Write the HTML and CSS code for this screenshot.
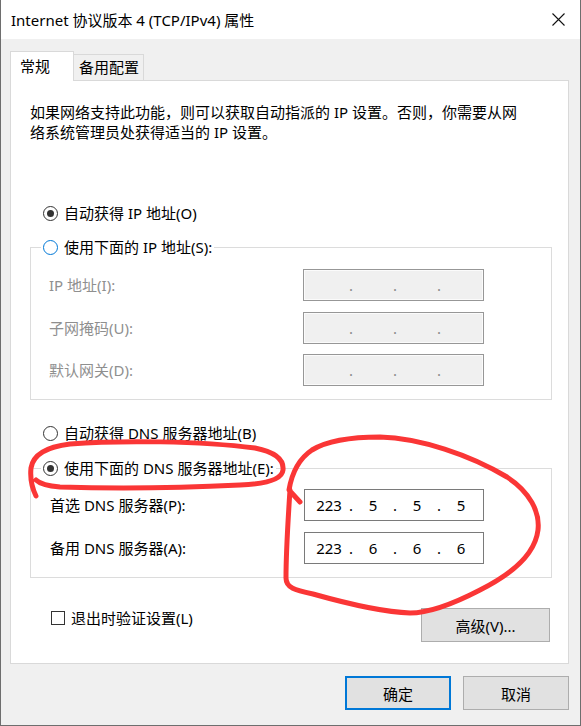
FILE: index.html
```html
<!DOCTYPE html>
<html lang="zh-CN">
<head>
<meta charset="utf-8">
<title>Internet 协议版本 4 (TCP/IPv4) 属性</title>
<link rel="stylesheet" href="styles.css">
</head>
<body>
<div class="window">
  <div class="titlebar">
    <span class="title">Internet 协议版本 4 (TCP/IPv4) 属性</span>
    <svg class="close" width="13" height="13" viewBox="0 0 13 13"><path d="M0.5 0.5 L12.5 12.5 M12.5 0.5 L0.5 12.5" stroke="#111" stroke-width="1.1" fill="none"/></svg>
  </div>
  <div class="main">
    <div class="tabs">
      <div class="tab active">常规</div>
      <div class="tab">备用配置</div>
    </div>
    <div class="panel">
      <p class="intro">如果网络支持此功能，则可以获取自动指派的 IP 设置。否则，你需要从网<br>络系统管理员处获得适当的 IP 设置。</p>

      <div class="option first"><span class="radio checked"></span><span>自动获得 IP 地址(O)</span></div>

      <fieldset class="group ip">
        <legend><span class="option"><span class="radio focus"></span><span>使用下面的 IP 地址(S):</span></span></legend>
        <div class="grid">
          <span class="lbl disabled">IP 地址(I):</span>
          <div class="ipbox off"><span class="oct"></span><span class="dot">.</span><span class="oct"></span><span class="dot">.</span><span class="oct"></span><span class="dot">.</span><span class="oct"></span></div>
          <span class="lbl disabled">子网掩码(U):</span>
          <div class="ipbox off"><span class="oct"></span><span class="dot">.</span><span class="oct"></span><span class="dot">.</span><span class="oct"></span><span class="dot">.</span><span class="oct"></span></div>
          <span class="lbl disabled">默认网关(D):</span>
          <div class="ipbox off"><span class="oct"></span><span class="dot">.</span><span class="oct"></span><span class="dot">.</span><span class="oct"></span><span class="dot">.</span><span class="oct"></span></div>
        </div>
      </fieldset>

      <div class="option dns-auto"><span class="radio"></span><span>自动获得 DNS 服务器地址(B)</span></div>

      <fieldset class="group dns">
        <legend><span class="option"><span class="radio checked"></span><span>使用下面的 DNS 服务器地址(E):</span></span></legend>
        <div class="grid">
          <span class="lbl">首选 DNS 服务器(P):</span>
          <div class="ipbox"><span class="oct">223</span><span class="dot">.</span><span class="oct">5</span><span class="dot">.</span><span class="oct">5</span><span class="dot">.</span><span class="oct">5</span></div>
          <span class="lbl">备用 DNS 服务器(A):</span>
          <div class="ipbox"><span class="oct">223</span><span class="dot">.</span><span class="oct">6</span><span class="dot">.</span><span class="oct">6</span><span class="dot">.</span><span class="oct">6</span></div>
        </div>
      </fieldset>

      <div class="bottom-row">
        <div class="check-row"><span class="checkbox"></span><span>退出时验证设置(L)</span></div>
        <button class="btn advanced">高级(V)...</button>
      </div>
    </div>
    <div class="dialog-buttons">
      <button class="btn default">确定</button>
      <button class="btn">取消</button>
    </div>
  </div>
  <svg class="annot" width="581" height="726" viewBox="0 0 581 726">
    <path d="M36 496 C32 488 30 478 31 468 C33 455 45 447 70 444 C120 440 200 441 255 448 C275 452 284 460 283 470 C282 480 265 484 240 485 C180 488 120 489 60 487 C48 486 40 484 36 480" />
    <path d="M300 502 L289 490 C292 472 300 458 312 450 C325 442 345 437 380 437 C420 438 470 455 507 477 C530 492 540 512 538 530 C535 555 510 575 480 590 C455 603 430 613 410 613 C380 612 345 603 313 594 C295 590 286 588 286 578 C286 555 288 520 290 490" />
  </svg>
</div>
</body>
</html>
```

FILE: styles.css
```css
* { box-sizing: border-box; }
html, body { margin: 0; padding: 0; background: #ffffff; }
body {
  font-family: "Noto Sans", "Noto Sans CJK SC", sans-serif;
  font-size: 15px;
  color: #000;
}
.window {
  position: relative;
  width: 581px;
  height: 726px;
  display: flex;
  flex-direction: column;
  border-left: 1px solid #6e6e6e;
  border-right: 1px solid #6e6e6e;
  border-bottom: 1px solid #6e6e6e;
  background: #f0f0f0;
}
.titlebar {
  height: 39px;
  background: #fff;
  display: flex;
  align-items: center;
  justify-content: space-between;
  padding: 0 15px 0 10px;
}
.title { font-size: 15px; line-height: 20px; }
.close { display: block; }
.main {
  flex: 1;
  display: flex;
  flex-direction: column;
  padding: 12px 11px 0 9px;
}
.tabs {
  display: flex;
  align-items: flex-end;
  height: 29px;
  position: relative;
  z-index: 1;
}
.tab {
  height: 26px;
  line-height: 25px;
  border: 1px solid #d9d9d9;
  border-bottom: none;
  border-left: none;
  width: 70px;
  padding-left: 5px;
  background: #f0f0f0;
}
.tab.active {
  height: 30px;
  line-height: 28px;
  width: 64px;
  padding-left: 9px;
  border-left: 1px solid #d9d9d9;
  background: #fff;
  margin-bottom: -1px;
}
.panel {
  width: 559px;
  background: #fff;
  border: 1px solid #d9d9d9;
  padding: 21px 16px 21px 19px;
  display: flex;
  flex-direction: column;
}
.intro {
  margin: 0;
  line-height: 20px;
  white-space: nowrap;
}
.option {
  display: flex;
  align-items: center;
  gap: 6px;
  height: 22px;
  line-height: 22px;
  white-space: nowrap;
}
.option.first { margin: 60px 0 0 13px; }
.option.dns-auto { margin: 22px 0 0 13px; align-self: flex-start; }
.radio {
  width: 15px;
  height: 15px;
  border: 1px solid #333;
  border-radius: 50%;
  background: #fff;
  display: inline-flex;
  align-items: center;
  justify-content: center;
  flex: none;
}
.radio.focus { border-color: #0078d7; }
.radio.checked::after {
  content: "";
  width: 7px;
  height: 7px;
  border-radius: 50%;
  background: #333;
}
.group {
  margin: 12px 0 0 0;
  border: 1px solid #dcdcdc;
  padding: 11px 0 13px 10px;
  min-width: 0;
}
.group.dns { margin-top: 13px; padding: 10px 0 13px 10px; }
.group legend {
  padding: 0 2px;
  height: 22px;
}
.grid {
  display: grid;
  grid-template-columns: 254px 181px;
  row-gap: 10.5px;
  align-items: center;
  margin-left: 8px;
}
.dns .grid { margin-left: 9px; row-gap: 11px; grid-template-columns: 254px 180px; }
.lbl { line-height: 20px; white-space: nowrap; }
.lbl.disabled { color: #8f8f8f; }
.ipbox {
  height: 32px;
  border: 1px solid #7a7a7a;
  background: #fff;
  display: flex;
  align-items: center;
  padding-left: 7px;
}
.ipbox.off {
  border-color: #979797;
  background: #f0f0f0;
  box-shadow: inset 0 0 0 1px #fbfbfb;
  padding-left: 8px;
  color: #8a8a8a;
}
.oct { width: 34px; text-align: center; line-height: 30px; }
.dot { width: 10px; text-align: center; line-height: 30px; }
.bottom-row {
  margin-top: 30px;
  display: flex;
  align-items: flex-start;
  justify-content: space-between;
}
.check-row {
  display: flex;
  align-items: center;
  gap: 6px;
  height: 20px;
  line-height: 20px;
  margin-left: 21px;
}
.checkbox {
  width: 14px;
  height: 14px;
  border: 1px solid #333;
  background: #fff;
  flex: none;
}
.btn {
  font: inherit;
  color: #000;
  background: #e1e1e1;
  border: 1px solid #adadad;
  height: 34px;
  padding: 0;
}
.advanced { width: 129px; margin-right: 2px; }
.dialog-buttons {
  width: 559px;
  margin-top: 12px;
  display: flex;
  justify-content: flex-end;
  gap: 12px;
}
.dialog-buttons .btn { width: 106px; }
.btn.default { border: 2px solid #0078d7; }
.annot {
  position: absolute;
  left: -1px;
  top: 0;
  pointer-events: none;
  fill: none;
  stroke: #fa3636;
  stroke-width: 5;
  stroke-linecap: round;
  stroke-linejoin: round;
}
```
